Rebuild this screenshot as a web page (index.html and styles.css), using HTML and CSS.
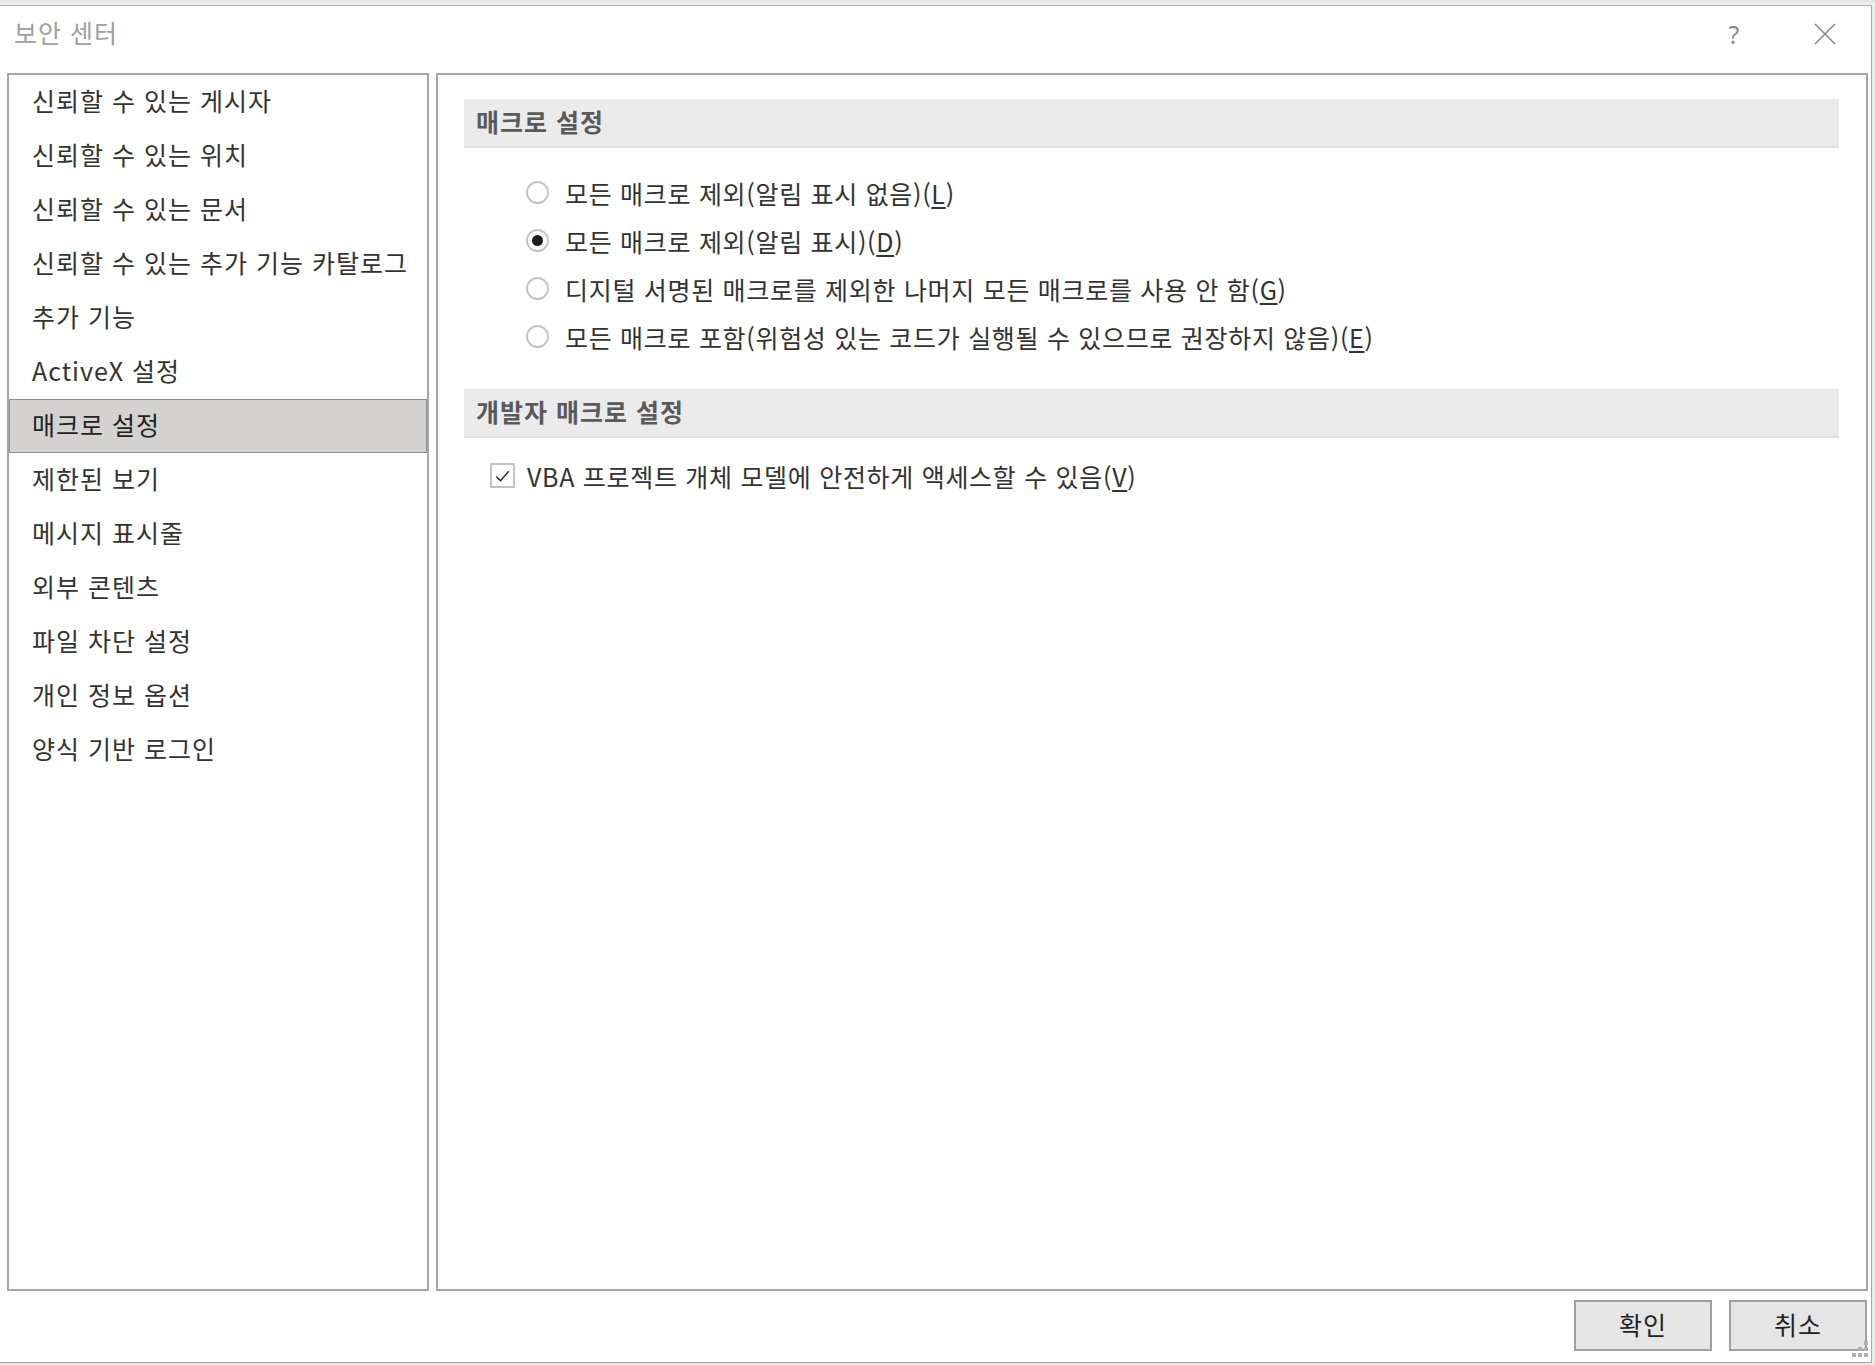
FILE: index.html
```html
<!DOCTYPE html>
<html lang="ko">
<head>
    <meta charset="UTF-8">
    <meta name="viewport" content="width=device-width, initial-scale=1.0">
    <title>보안 센터</title>
    <link rel="stylesheet" href="styles.css">
</head>
<body>
    <div class="dialog">
        <div class="titlebar">
            <span class="title">보안 센터</span>
            <div class="title-buttons">
                <span class="help">?</span>
                <span class="close">
                    <svg width="22" height="22" viewBox="0 0 22 22"><path d="M1 1 L21 21 M21 1 L1 21" stroke="#8a8a8a" stroke-width="1.6" fill="none"/></svg>
                </span>
            </div>
        </div>

        <div class="panels">
            <ul class="nav">
                <li>신뢰할 수 있는 게시자</li>
                <li>신뢰할 수 있는 위치</li>
                <li>신뢰할 수 있는 문서</li>
                <li>신뢰할 수 있는 추가 기능 카탈로그</li>
                <li>추가 기능</li>
                <li>ActiveX 설정</li>
                <li class="selected">매크로 설정</li>
                <li>제한된 보기</li>
                <li>메시지 표시줄</li>
                <li>외부 콘텐츠</li>
                <li>파일 차단 설정</li>
                <li>개인 정보 옵션</li>
                <li>양식 기반 로그인</li>
            </ul>

            <div class="content">
                <div class="section-title">매크로 설정</div>
                <div class="options">
                    <label class="radio-row"><span class="radio"></span>모든 매크로 제외(알림 표시 없음)(<u>L</u>)</label>
                    <label class="radio-row"><span class="radio checked"></span>모든 매크로 제외(알림 표시)(<u>D</u>)</label>
                    <label class="radio-row"><span class="radio"></span>디지털 서명된 매크로를 제외한 나머지 모든 매크로를 사용 안 함(<u>G</u>)</label>
                    <label class="radio-row"><span class="radio"></span>모든 매크로 포함(위험성 있는 코드가 실행될 수 있으므로 권장하지 않음)(<u>E</u>)</label>
                </div>

                <div class="section-title">개발자 매크로 설정</div>
                <label class="check-row">
                    <span class="checkbox">
                        <svg width="22" height="22" viewBox="0 0 22 22"><path d="M4.5 11.5 L9 16 L17.5 6" stroke="#222" stroke-width="1.4" fill="none"/></svg>
                    </span>VBA 프로젝트 개체 모델에 안전하게 액세스할 수 있음(<u>V</u>)
                </label>
            </div>
        </div>

        <div class="buttons">
            <button type="button">확인</button>
            <button type="button">취소</button>
        </div>

        <svg class="grip" width="18" height="18" viewBox="0 0 18 18">
            <rect x="12" y="0" width="4" height="4" fill="#b0b0b0"/>
            <rect x="6" y="6" width="4" height="4" fill="#b0b0b0"/>
            <rect x="12" y="6" width="4" height="4" fill="#b0b0b0"/>
            <rect x="0" y="12" width="4" height="4" fill="#b0b0b0"/>
            <rect x="6" y="12" width="4" height="4" fill="#b0b0b0"/>
            <rect x="12" y="12" width="4" height="4" fill="#b0b0b0"/>
        </svg>
    </div>
</body>
</html>
```

FILE: styles.css
```css
body {
    margin: 0;
    padding: 0;
    background: linear-gradient(#e4e4e4, #f2f2f2 5px, #ececec 5px);
    font-family: "Noto Sans CJK KR", "Noto Sans", sans-serif;
    color: #333;
    font-size: 25px;
    letter-spacing: 1px;
}

.dialog {
    position: relative;
    box-sizing: border-box;
    width: 1872px;
    height: 1358px;
    margin-top: 5px;
    background-color: white;
    border-top: 1px solid #a9a9a9;
    border-right: 1px solid #a9a9a9;
    border-bottom: 1px solid #a9a9a9;
}

.titlebar {
    height: 56px;
    display: flex;
    align-items: center;
    justify-content: space-between;
}

.title {
    padding-left: 14px;
    padding-bottom: 4px;
    color: #a0a0a0;
}

.title-buttons {
    display: flex;
    align-items: center;
    padding-right: 23px;
}

.help {
    width: 46px;
    text-align: center;
    font-family: "Noto Sans", sans-serif;
    font-size: 25px;
    letter-spacing: 0;
    color: #8a8a8a;
}

.close {
    width: 46px;
    margin-left: 45px;
    display: flex;
    justify-content: center;
}

.panels {
    display: flex;
    gap: 7px;
    margin-top: 11px;
    padding-left: 7px;
    height: 1218px;
}

.nav {
    box-sizing: border-box;
    width: 422px;
    height: 100%;
    margin: 0;
    padding: 0;
    list-style: none;
    border: 2px solid #a6a6a6;
}

.nav li {
    box-sizing: border-box;
    height: 54px;
    display: flex;
    align-items: center;
    padding-left: 22px;
    padding-bottom: 4px;
    border: 1px solid transparent;
    white-space: nowrap;
}

.nav li.selected {
    background-color: #d3d2d0;
    border-color: #8e8e8e;
    color: #222;
}

.content {
    box-sizing: border-box;
    width: 1432px;
    height: 100%;
    padding: 24px 27px 0 26px;
    border: 2px solid #a6a6a6;
}

.section-title {
    box-sizing: border-box;
    height: 49px;
    display: flex;
    align-items: center;
    padding-left: 12px;
    padding-bottom: 4px;
    background-color: #ebebeb;
    border-bottom: 2px solid #e0dfe6;
    font-weight: bold;
    color: #5a5a5a;
}

.options {
    padding: 21px 0 28px;
}

.radio-row,
.check-row {
    display: flex;
    align-items: center;
    height: 48px;
    padding-bottom: 1px;
    box-sizing: border-box;
    white-space: nowrap;
    letter-spacing: 0.7px;
}

.radio-row {
    padding-left: 62px;
}

.radio {
    box-sizing: border-box;
    width: 23px;
    height: 23px;
    margin-right: 16px;
    border: 2px solid #c6c6c6;
    border-radius: 50%;
    display: flex;
    align-items: center;
    justify-content: center;
}

.radio.checked::after {
    content: "";
    width: 11px;
    height: 11px;
    border-radius: 50%;
    background-color: #1c1c1c;
}

.check-row {
    margin-top: 14px;
    padding-left: 26px;
}

.checkbox {
    box-sizing: border-box;
    width: 25px;
    height: 25px;
    margin-right: 12px;
    border: 2px solid #c3c3c3;
    display: flex;
    align-items: center;
    justify-content: center;
}

u {
    text-underline-offset: 3px;
}

.buttons {
    display: flex;
    justify-content: flex-end;
    gap: 17px;
    margin-top: 9px;
    padding-right: 4px;
}

.buttons button {
    box-sizing: border-box;
    width: 138px;
    height: 51px;
    background-color: #e5e5e5;
    border: 2px solid #a0a0a0;
    font-family: "Noto Sans CJK KR", sans-serif;
    font-size: 25px;
    letter-spacing: 1px;
    color: #222;
    padding: 0 0 3px;
}

.grip {
    position: absolute;
    right: 1px;
    bottom: 3px;
}
```
